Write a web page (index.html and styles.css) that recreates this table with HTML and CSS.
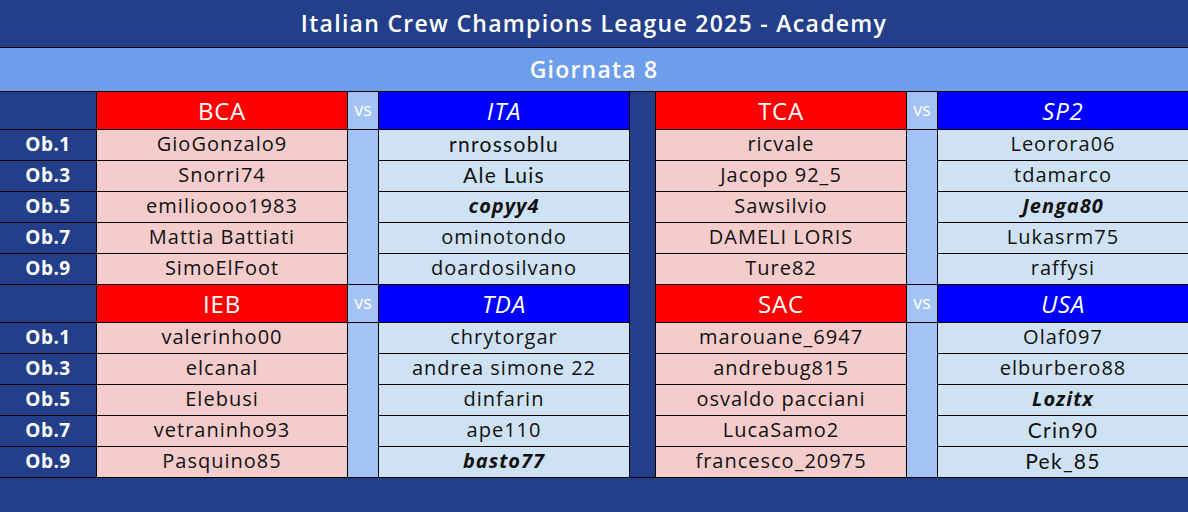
FILE: index.html
```html
<!DOCTYPE html>
<html lang="it">
<head>
<meta charset="utf-8">
<title>Italian Crew Champions League 2025 - Academy</title>
<link rel="stylesheet" href="styles.css">
</head>
<body>
<div class="page">
  <div class="title">Italian Crew Champions League 2025 - Academy</div>
  <div class="round">Giornata 8</div>
  <div class="grid">
    <div class="gap"></div>

    <div class="lbl"></div>
    <div class="head red">BCA</div>
    <div class="vs">vs</div>
    <div class="head blue it">ITA</div>
    <div class="head red">TCA</div>
    <div class="vs">vs</div>
    <div class="head blue it">SP2</div>

    <div class="lbl">Ob.1</div>
    <div class="cell pink">GioGonzalo9</div>
    <div class="vsbody"></div>
    <div class="cell light alt">rnrossoblu</div>
    <div class="cell pink">ricvale</div>
    <div class="vsbody"></div>
    <div class="cell light">Leorora06</div>

    <div class="lbl">Ob.3</div>
    <div class="cell pink">Snorri74</div>
    <div class="cell light alt">Ale Luis</div>
    <div class="cell pink">Jacopo 92_5</div>
    <div class="cell light">tdamarco</div>

    <div class="lbl">Ob.5</div>
    <div class="cell pink">emilioooo1983</div>
    <div class="cell light bi">copyy4</div>
    <div class="cell pink">Sawsilvio</div>
    <div class="cell light bi">Jenga80</div>

    <div class="lbl">Ob.7</div>
    <div class="cell pink">Mattia Battiati</div>
    <div class="cell light">ominotondo</div>
    <div class="cell pink">DAMELI LORIS</div>
    <div class="cell light">Lukasrm75</div>

    <div class="lbl">Ob.9</div>
    <div class="cell pink">SimoElFoot</div>
    <div class="cell light">doardosilvano</div>
    <div class="cell pink">Ture82</div>
    <div class="cell light">raffysi</div>

    <div class="lbl"></div>
    <div class="head red">IEB</div>
    <div class="vs">vs</div>
    <div class="head blue it">TDA</div>
    <div class="head red">SAC</div>
    <div class="vs">vs</div>
    <div class="head blue it">USA</div>

    <div class="lbl">Ob.1</div>
    <div class="cell pink">valerinho00</div>
    <div class="vsbody"></div>
    <div class="cell light">chrytorgar</div>
    <div class="cell pink">marouane_6947</div>
    <div class="vsbody"></div>
    <div class="cell light">Olaf097</div>

    <div class="lbl">Ob.3</div>
    <div class="cell pink">elcanal</div>
    <div class="cell light">andrea simone 22</div>
    <div class="cell pink">andrebug815</div>
    <div class="cell light">elburbero88</div>

    <div class="lbl">Ob.5</div>
    <div class="cell pink">Elebusi</div>
    <div class="cell light">dinfarin</div>
    <div class="cell pink">osvaldo pacciani</div>
    <div class="cell light bi">Lozitx</div>

    <div class="lbl">Ob.7</div>
    <div class="cell pink">vetraninho93</div>
    <div class="cell light">ape110</div>
    <div class="cell pink">LucaSamo2</div>
    <div class="cell light alt">Crin90</div>

    <div class="lbl">Ob.9</div>
    <div class="cell pink">Pasquino85</div>
    <div class="cell light bi">basto77</div>
    <div class="cell pink">francesco_20975</div>
    <div class="cell light alt">Pek_85</div>
  </div>
  <div class="footer"></div>
</div>
</body>
</html>
```

FILE: styles.css
```css
* { box-sizing: border-box; }
html, body { margin: 0; padding: 0; }
body {
  background: #243f8a;
  font-family: "Open Sans", "Noto Sans", sans-serif;
  width: 1188px;
  height: 512px;
  overflow: hidden;
}
.page { display: flex; flex-direction: column; width: 1188px; }
.title {
  height: 48px;
  background: #243f8a;
  border-bottom: 1px solid #000;
  color: #fff;
  font-size: 23px;
  letter-spacing: 1.3px;
  font-weight: 600;
  display: flex;
  align-items: center;
  justify-content: center;
  padding-bottom: 2px;
}
.round {
  height: 44px;
  background: #6d9eeb;
  border-bottom: 1px solid #000;
  color: #fff;
  font-size: 23px;
  letter-spacing: 1.2px;
  font-weight: 600;
  display: flex;
  align-items: center;
  justify-content: center;
  padding-bottom: 1px;
}
.grid {
  display: grid;
  grid-template-columns: 96px 250px 30px 250px 25px 250px 30px 250px;
  grid-template-rows: 37px repeat(5, 30px) 37px repeat(5, 30px);
  gap: 1px;
  background: #000;
  border-bottom: 1px solid #000;
}
.grid > div {
  display: flex;
  align-items: center;
  justify-content: center;
  white-space: nowrap;
}
.gap { grid-column: 5; grid-row: 1 / -1; background: #243f8a; }
.lbl { background: #243f8a; color: #fff; font-weight: 700; font-size: 19px; letter-spacing: 0.5px; padding-bottom: 2px; }
.head { color: #fff; font-size: 24px; letter-spacing: 0.8px; }
.red { background: #ff0000; }
.blue { background: #0000ff; }
.it { font-style: italic; }
.vs { background: #a4c2f4; color: #fff; font-size: 18px; padding-bottom: 3px; }
.vsbody { background: #a4c2f4; grid-row: span 5; }
.cell { font-size: 20px; letter-spacing: 1px; color: #111; padding-bottom: 3px; }
.pink { background: #f4cccc; }
.light { background: #cfe2f3; }
.bi { font-weight: 700; font-style: italic; }
.alt { font-family: "Lato", "Open Sans", sans-serif; font-size: 21px; letter-spacing: 1.3px; }
.footer { height: 34px; background: #243f8a; }
```
